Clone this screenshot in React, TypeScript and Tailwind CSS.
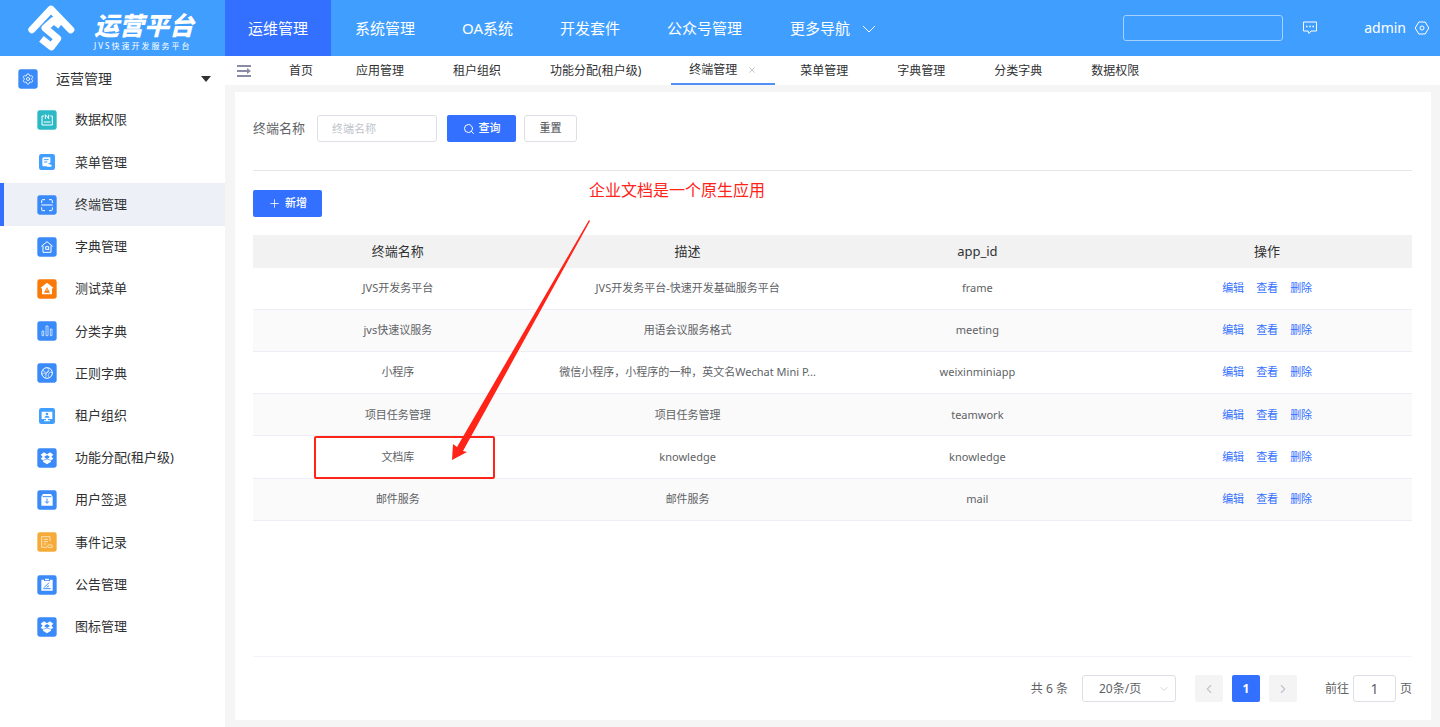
import type { ReactNode } from "react";
import { ChevronDown, ChevronLeft, ChevronRight, Plus, Search, Settings, X } from "lucide-react";

//SIDEBAR ICONS
const Tile = ({ color, small, children }: { color: string; small?: boolean; children: ReactNode }) => (
    <svg className="size-5 shrink-0" viewBox="-1 -1 60 60" fill="none" stroke="white" strokeWidth="3" aria-hidden="true">
        {small ? (
            <rect x="5" y="5" width="48" height="48" rx="7" fill={color} stroke="none" />
        ) : (
            <rect x="0" y="0" width="58" height="58" rx="7" fill={color} stroke="none" />
        )}
        {children}
    </svg>
);

const Dropbox = () => (
    <Tile color="#3a8bf9">
        <g fill="white" stroke="none">
            <path
                fillRule="evenodd"
                d="M20 12l9 6 9-6 10 7-6 6 6 6-7 5v4l-12 8-12-8v-4l-7-5 6-6-6-6z M29 20l-9 6 9 6 9-6z"
            />
        </g>
        <path d="M18 36l11-4 11 4" stroke="#3a8bf9" strokeWidth="2" />
    </Tile>
);

const menuItems: { label: string; icon: ReactNode }[] = [
    {
        label: "数据权限",
        icon: (
            <Tile color="#2cb9c6">
                <path d="M20 17h-6v27h31V17h-6 M24 26V13l10 12V13 M19 35h21" />
            </Tile>
        ),
    },
    {
        label: "菜单管理",
        icon: (
            <Tile color="#419fff" small>
                <path d="M18 15h21v16l-7 3v8H18a3 3 0 0 1-3-3V18z" fill="white" stroke="none" />
                <path d="M20 22h14 M20 29h10" stroke="#419fff" />
                <path d="M28 40c1-6 8-7 10-3 4-1 6 3 4 6H30z" fill="white" stroke="none" />
            </Tile>
        ),
    },
    {
        label: "终端管理",
        icon: (
            <Tile color="#3a8bf9">
                <path d="M13 23v-7a3 3 0 0 1 3-3h7 M35 13h7a3 3 0 0 1 3 3v7 M45 36v7a3 3 0 0 1-3 3h-7 M23 46h-7a3 3 0 0 1-3-3v-7 M12 29h34" />
            </Tile>
        ),
    },
    {
        label: "字典管理",
        icon: (
            <Tile color="#3a8bf9">
                <path d="M12 27l17-14 17 14 M17 25v20h24V25" strokeLinejoin="round" />
                <path d="M34 36h-9v-8h9v10" />
            </Tile>
        ),
    },
    {
        label: "测试菜单",
        icon: (
            <Tile color="#f97909">
                <path d="M29 10l19 15-4 3v17H14V28l-4-3z" fill="white" stroke="none" />
                <path d="M29 24l9 16H20z" fill="#f97909" stroke="none" />
                <path d="M29 29v6" strokeWidth="2" />
            </Tile>
        ),
    },
    {
        label: "分类字典",
        icon: (
            <Tile color="#3a8bf9">
                <path d="M14 29h5v14h-5z M26 14h6v29h-6z M39 23h5v20h-5z" strokeWidth="2" />
            </Tile>
        ),
    },
    {
        label: "正则字典",
        icon: (
            <Tile color="#3a8bf9">
                <circle cx="29" cy="29" r="16" />
                <path d="M18 19c1 6 5 9 11 8 4-1 5-7 3-13 M14 33c5-5 11-5 12 1 1 5-2 8-4 9 M45 28c-6-3-11 0-12 6-1 4 1 7 4 9 M22 36l14-14" strokeWidth="2" />
            </Tile>
        ),
    },
    {
        label: "租户组织",
        icon: (
            <Tile color="#419fff" small>
                <path d="M13 16h32v22H13z M26 38h6v5h-6z M20 42h18v3H20z" fill="white" stroke="none" />
                <circle cx="29" cy="23" r="4" fill="#419fff" stroke="none" />
                <path d="M21 34c1-8 15-8 16 0z" fill="#419fff" stroke="none" />
            </Tile>
        ),
    },
    { label: "功能分配(租户级)", icon: <Dropbox /> },
    {
        label: "用户签退",
        icon: (
            <Tile color="#3a8bf9">
                <path d="M17 11h24l5 8v27H12V19z" fill="white" stroke="none" />
                <path d="M16 19h26 M29 25v13 M23 33l6 6 6-6" stroke="#3a8bf9" />
            </Tile>
        ),
    },
    {
        label: "事件记录",
        icon: (
            <Tile color="#f6ab39">
                <path d="M38 27V13H13v32h16 M19 21h13 M19 28h13 M19 35h8" strokeWidth="2" />
                <path d="M33 45c-5-4 0-9 3-7 2-4 8-2 7 2 4 1 3 5 0 5z" strokeWidth="2" />
            </Tile>
        ),
    },
    {
        label: "公告管理",
        icon: (
            <Tile color="#3a8bf9">
                <path d="M12 13h8v4h18v-4h8v33H12z M23 10h12v5H23z" fill="white" stroke="none" />
                <path d="M20 37l15-15 M18 40h22 M28 36l7-5" stroke="#3a8bf9" />
            </Tile>
        ),
    },
    { label: "图标管理", icon: <Dropbox /> },
];

const navItems = ["运维管理", "系统管理", "OA系统", "开发套件", "公众号管理"];
const tabsLeft = ["应用管理", "租户组织", "功能分配(租户级)"];
const tabsRight = ["菜单管理", "字典管理", "分类字典", "数据权限"];
const actions = ["编辑", "查看", "删除"];

const rows = [
    ["JVS开发务平台", "JVS开发务平台-快速开发基础服务平台", "frame"],
    ["jvs快速议服务", "用语会议服务格式", "meeting"],
    ["小程序", "微信小程序，小程序的一种，英文名Wechat Mini P...", "weixinminiapp"],
    ["项目任务管理", "项目任务管理", "teamwork"],
    ["文档库", "knowledge", "knowledge"],
    ["邮件服务", "邮件服务", "mail"],
];

const Header = () => (
    <header className="flex h-14 items-stretch bg-[#409eff] text-white">
        <div className="flex w-[225px] shrink-0 items-center pl-[27px]">
            <svg className="h-12 w-12 shrink-0" viewBox="22 12 144 146" fill="none" stroke="white" aria-hidden="true">
                <path d="M36 90L94 28l60 62" strokeWidth="22" strokeLinecap="round" strokeLinejoin="round" />
                <path d="M123 78L102 62 76 85l38 32-19 25-30-24" strokeWidth="22" strokeLinejoin="round" />
            </svg>
            <div className="ml-[19px] flex flex-col pt-1">
                <span className="text-[25px] font-black leading-8 italic">运营平台</span>
                <span className="text-[8px] leading-[10px] tracking-[2px] whitespace-nowrap">JVS快速开发服务平台</span>
            </div>
        </div>
        <nav className="flex gap-px text-[15px]">
            {navItems.map((item, i) => (
                <a
                    key={item}
                    href="#"
                    className={i === 0 ? "flex items-center bg-[#3370ff] px-[23px] pt-px" : "flex items-center px-[23px] pt-px"}
                >
                    {item}
                </a>
            ))}
            <button type="button" className="flex items-center gap-3 px-6 pt-px">
                更多导航
                <svg className="h-2 w-3.5" viewBox="0 0 14 8" fill="none" stroke="white" aria-hidden="true">
                    <path d="M1 1l6 6 6-6" />
                </svg>
            </button>
        </nav>
        <div className="ml-auto flex items-center pr-2.5">
            <input
                type="text"
                aria-label="搜索"
                className="h-[26px] w-40 rounded-[3px] border border-[#a5d1ff] bg-transparent px-2 text-xs outline-none"
            />
            <button type="button" aria-label="消息" className="ml-[19px]">
                <svg className="size-4" viewBox="0 0 16 16" fill="none" stroke="white" aria-hidden="true">
                    <path d="M1.5 2h13v9H9l-2 2.500L6 11H1.500z" />
                    <path d="M4 6.500h1.500 M7.300 6.500h1.500 M10.500 6.500H12" strokeWidth="1.500" />
                </svg>
            </button>
            <a href="#" className="ml-[46px] flex items-center gap-2 text-sm">
                admin
                <svg className="size-4" viewBox="0 0 16 16" fill="none" stroke="white" aria-hidden="true">
                    <path d="M4.800 2h6.400l3.600 6-3.600 6H4.800L1.200 8z" strokeLinejoin="round" />
                    <circle cx="8" cy="8" r="2" />
                </svg>
            </a>
        </div>
    </header>
);

const Sidebar = () => (
    <aside className="w-[225px] shrink-0 bg-white text-[#303133]">
        <button type="button" className="flex h-[43px] w-full items-center pt-0.5 pr-3.5 pl-[18px] text-sm">
            <Tile color="#3a8bf9">
                <Settings x="10" y="10" width="38" height="38" color="white" strokeWidth={1.5} />
            </Tile>
            <span className="ml-[18px]">运营管理</span>
            <svg className="ml-auto h-1.5 w-2.5" viewBox="0 0 10 6" fill="#303133" aria-hidden="true">
                <path d="M0 0h10L5 6z" />
            </svg>
        </button>
        <ul className="grid h-[549px] auto-rows-fr text-[13px]">
            {menuItems.map(({ label, icon }) => (
                <li key={label} className="flex">
                    <a
                        href="#"
                        className={
                            label === "终端管理"
                                ? "flex flex-1 items-center gap-[18px] border-l-4 border-[#3370ff] bg-[#edf1f7] pl-[33px]"
                                : "flex flex-1 items-center gap-[18px] pl-[37px]"
                        }
                    >
                        {icon}
                        {label}
                    </a>
                </li>
            ))}
        </ul>
    </aside>
);

const TabBar = () => (
    <div className="flex h-[29px] items-stretch bg-white text-xs text-[#303133]">
        <button type="button" aria-label="折叠菜单" className="ml-3 pr-[14px]">
            <svg className="h-3 w-3.5" viewBox="0 0 14 12" fill="#8a8ca5" aria-hidden="true">
                <path d="M0 0h14v2H0z M0 5h10V3l4 3-4 3V7H0z M0 10h14v2H0z" />
            </svg>
        </button>
        <nav className="flex gap-px">
            <a href="#" className="flex items-center pr-[18px] pl-6">首页</a>
            {tabsLeft.map((tab) => (
                <a key={tab} href="#" className="flex items-center px-6">{tab}</a>
            ))}
            <div className="ml-[5px] flex items-center border-b-2 border-[#5390f5] px-[18px]">
                <a href="#">终端管理</a>
                <button type="button" aria-label="关闭" className="ml-2.5 text-[#b9bcc4]">
                    <X size={10} strokeWidth={2} />
                </button>
            </div>
            {tabsRight.map((tab) => (
                <a key={tab} href="#" className="flex items-center px-6">{tab}</a>
            ))}
        </nav>
    </div>
);

const TerminalTable = () => (
    <table className="mt-[18px] h-[286px] w-full table-fixed border-collapse text-center text-[11px] text-[#606266]">
        <thead>
            <tr className="h-[33px] bg-[#f2f2f2] text-[13px] text-[#303133]">
                <th className="font-normal">终端名称</th>
                <th className="font-normal">描述</th>
                <th className="font-normal">app_id</th>
                <th className="font-normal">操作</th>
            </tr>
        </thead>
        <tbody>
            {rows.map(([name, desc, appId]) => (
                <tr key={name} className="border-b border-[#ebeef5] even:bg-[#fafafa]">
                    <td>{name}</td>
                    <td className="whitespace-nowrap">{desc}</td>
                    <td>{appId}</td>
                    <td>
                        <div className="flex justify-center gap-3 text-[#3370ff]">
                            {actions.map((action) => (
                                <a key={action} href="#">{action}</a>
                            ))}
                        </div>
                    </td>
                </tr>
            ))}
        </tbody>
    </table>
);

const Pagination = () => (
    <div className="mt-auto flex items-center justify-end border-t border-[#f2f4f9] py-[18px] text-xs text-[#606266]">
        <span>共 6 条</span>
        <div className="relative ml-[14px]">
            <select
                aria-label="每页条数"
                className="h-[27px] w-[94px] appearance-none rounded-[3px] border border-[#dcdfe6] bg-white pl-4 outline-none"
            >
                <option>20条/页</option>
            </select>
            <ChevronDown size={12} strokeWidth={1.5} className="pointer-events-none absolute top-2 right-1.5 text-[#c0c4cc]" />
        </div>
        <button type="button" aria-label="上一页" className="ml-[19px] flex h-[27px] w-7 items-center justify-center rounded-xs bg-[#f4f4f5] text-[#c0c4cc]">
            <ChevronLeft size={14} />
        </button>
        <button type="button" className="ml-[9px] h-[27px] w-7 rounded-xs bg-[#3370ff] font-bold text-white">1</button>
        <button type="button" aria-label="下一页" className="ml-[9px] flex h-[27px] w-7 items-center justify-center rounded-xs bg-[#f4f4f5] text-[#c0c4cc]">
            <ChevronRight size={14} />
        </button>
        <label className="ml-7 flex items-center gap-1">
            前往
            <input
                type="text"
                defaultValue="1"
                className="h-[27px] w-[43px] rounded-[3px] border border-[#dcdfe6] text-center text-sm outline-none"
            />
            页
        </label>
    </div>
);

//RED MARKS OVER THE TABLE
const Annotation = () => (
    <div className="pointer-events-none absolute inset-0 text-[#ff2318]">
        <p className="absolute top-[86px] left-[354px] text-base whitespace-nowrap">企业文档是一个原生应用</p>
        <div className="absolute top-[344px] left-[79px] h-[43px] w-[181px] rounded-xs border-2 border-[#ff2318]" />
        <svg className="absolute top-[128px] left-[214px] h-[240px] w-[142px]" viewBox="0 0 142 240" fill="#ff2318" aria-hidden="true">
            <path d="M140 0l1 1L14 231l4 1-15 8 1-16 4 3z" />
        </svg>
    </div>
);

export default function App() {
    return (
        <div className="flex min-h-screen flex-col bg-white font-['Noto_Sans','Noto_Sans_CJK_SC',sans-serif]">
            <Header />
            <div className="flex flex-1">
                <Sidebar />
                <div className="flex min-w-0 flex-1 flex-col bg-[#f5f5f5]">
                    <TabBar />
                    <main className="relative mt-[7px] mr-[9px] mb-[7px] ml-2.5 flex flex-1 flex-col bg-white pr-[19px] pl-[18px]">
                        <form className="flex items-center border-b border-[#e6e6e8] pt-[23px] pb-7">
                            <label htmlFor="terminal-name" className="text-[13px] text-[#606266]">终端名称</label>
                            <input
                                id="terminal-name"
                                type="text"
                                placeholder="终端名称"
                                className="ml-3 h-[27px] w-[120px] rounded-[3px] border border-[#dcdfe6] px-3.5 text-[11px] outline-none placeholder:text-[#c0c4cc]"
                            />
                            <button type="button" className="ml-2.5 flex h-[27px] w-[69px] items-center justify-center gap-1 rounded-xs bg-[#3370ff] text-[11px] font-medium text-white">
                                <Search size={12} strokeWidth={2} />
                                查询
                            </button>
                            <button type="button" className="ml-2 h-[27px] w-[53px] rounded-[3px] border border-[#dcdfe6] text-[11px] font-medium text-[#606266]">
                                重置
                            </button>
                        </form>
                        <button type="button" className="mt-[19px] flex h-[27px] w-[69px] shrink-0 items-center justify-center gap-1 rounded-xs bg-[#3370ff] text-[11px] font-medium text-white">
                            <Plus size={13} strokeWidth={1.5} />
                            新增
                        </button>
                        <TerminalTable />
                        <Pagination />
                        <Annotation />
                    </main>
                </div>
            </div>
        </div>
    );
}
